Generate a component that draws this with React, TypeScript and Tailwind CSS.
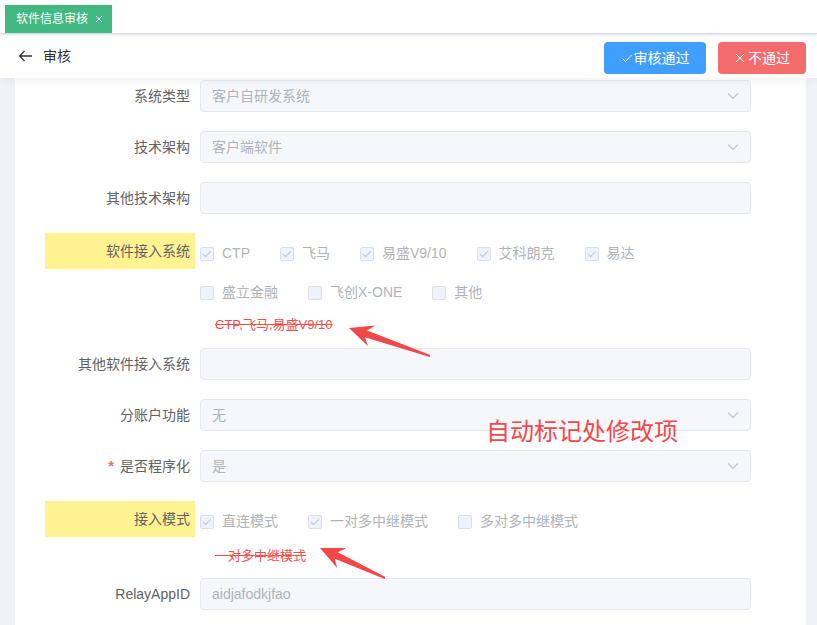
import React from 'react';

const font = "font-['Liberation_Sans','Noto_Sans_CJK_SC',sans-serif]";

const Chevron = () => (
  <svg width="12" height="12" viewBox="0 0 12 12" className="shrink-0">
    <polyline points="1,3.5 6,8.5 11,3.5" fill="none" stroke="#c0c4cc" strokeWidth="1.2" />
  </svg>
);

interface InputProps {
  value?: string;
  select?: boolean;
}

const Input = ({ value = '', select }: InputProps) => (
  <div className="w-[551px] h-[32px] rounded-[4px] border border-[#e4e7ed] bg-[#f5f7fa] flex items-center justify-between px-[11px] text-[14px] text-[#b0b3b9]">
    <span>{value}</span>
    {select && <Chevron />}
  </div>
);

const Checkbox = ({ label, checked }: { label: string; checked?: boolean }) => (
  <span className="inline-flex items-center mr-[30px]">
    <span className="relative w-[14px] h-[14px] mt-[2px] border border-[#dcdfe6] rounded-[2px] bg-[#edf2fc]">
      {checked && (
        <span className="absolute left-[4px] top-[1px] w-[4px] h-[8px] border-r border-b border-[#c0c4cc] rotate-45" />
      )}
    </span>
    <span className="ml-[8px] text-[14px] leading-[20px] text-[#b0b3b9]">{label}</span>
  </span>
);

interface ItemProps {
  label: string;
  required?: boolean;
  highlight?: boolean;
  labelH?: string;
  mb?: string;
  children: React.ReactNode;
}

const Item = ({ label, required, highlight, labelH = 'h-[32px]', mb = 'mb-[19px]', children }: ItemProps) => (
  <div className={`flex items-start ${mb}`}>
    <div
      className={`w-[150px] ${labelH} pr-[5px] flex items-center justify-end text-[14px] text-[#606266] ${
        highlight ? 'bg-[#fff391]' : ''
      }`}
    >
      {required && <span className="text-[#f56c6c] text-[15px] font-bold mr-[6px]">*</span>}
      {label}
    </div>
    <div className="ml-[5px]">{children}</div>
  </div>
);

const Changed = ({ text }: { text: string }) => (
  <div className="h-[20px] leading-[20px] pl-[15px] text-[13px] text-[#f54d4d] line-through">{text}</div>
);

const App = () => {
  return (
    <div className={`relative w-full h-[625px] overflow-hidden bg-[#f0f2f5] ${font}`}>
      {/* tab bar */}
      <div className="h-[34px] bg-white border-b border-[#d8dce5] shadow-[0_1px_3px_rgba(0,0,0,0.12)] flex items-end pl-[5px] relative z-20">
        <div className="h-[28px] bg-[#42b983] text-white text-[12px] flex items-center pl-[11px] pr-[9px]">
          软件信息审核
          <svg width="8" height="8" viewBox="0 0 8 8" className="ml-[7px]">
            <path d="M1 1 L7 7 M7 1 L1 7" stroke="#fff" strokeWidth="1" />
          </svg>
        </div>
      </div>

      {/* header */}
      <div className="h-[44px] bg-white flex items-center justify-between pl-[18px] pr-[11px] relative z-10 shadow-[0_2px_8px_rgba(0,21,41,0.06)]">
        <div className="flex items-center text-[14px] text-[#303133]">
          <svg width="15" height="12" viewBox="0 0 15 12">
            <path d="M14 6 H1.5 M6.5 1 L1.5 6 L6.5 11" fill="none" stroke="#303133" strokeWidth="1.3" />
          </svg>
          <span className="ml-[10px]">审核</span>
        </div>
        <div className="flex items-center gap-[12px] mt-[4px]">
          <button className="h-[32px] w-[102px] rounded-[4px] bg-[#409eff] text-white text-[14px] flex items-center justify-center">
            <svg width="12" height="12" viewBox="0 0 12 12" className="mr-[1px]">
              <polyline points="1.5,6.5 4.5,9.5 10.5,3" fill="none" stroke="#fff" strokeWidth="1" />
            </svg>
            审核通过
          </button>
          <button className="h-[32px] w-[88px] rounded-[4px] bg-[#f56c6c] text-white text-[14px] flex items-center justify-center">
            <svg width="12" height="12" viewBox="0 0 12 12" className="mr-[2px]">
              <path d="M2 2 L10 10 M10 2 L2 10" stroke="#fff" strokeWidth="1" />
            </svg>
            不通过
          </button>
        </div>
      </div>

      {/* form panel */}
      <div className="ml-[15px] w-[791px] h-[547px] bg-white pt-[2px] pl-[30px]">
        <Item label="系统类型">
          <Input value="客户自研发系统" select />
        </Item>
        <Item label="技术架构">
          <Input value="客户端软件" select />
        </Item>
        <Item label="其他技术架构">
          <Input />
        </Item>
        <Item label="软件接入系统" highlight labelH="h-[36px]" mb="mb-[13px]">
          <div className="h-[40px] flex items-center">
            <Checkbox label="CTP" checked />
            <Checkbox label="飞马" checked />
            <Checkbox label="易盛V9/10" checked />
            <Checkbox label="艾科朗克" checked />
            <Checkbox label="易达" checked />
          </div>
          <div className="h-[38px] flex items-center">
            <Checkbox label="盛立金融" />
            <Checkbox label="飞创X-ONE" />
            <Checkbox label="其他" />
          </div>
          <div className="mt-[4px]">
            <Changed text="CTP,飞马,易盛V9/10" />
          </div>
        </Item>
        <Item label="其他软件接入系统">
          <Input />
        </Item>
        <Item label="分账户功能">
          <Input value="无" select />
        </Item>
        <Item label="是否程序化" required>
          <Input value="是" select />
        </Item>
        <Item label="接入模式" highlight labelH="h-[36px]" mb="mb-[12px]">
          <div className="h-[40px] flex items-center">
            <Checkbox label="直连模式" checked />
            <Checkbox label="一对多中继模式" checked />
            <Checkbox label="多对多中继模式" />
          </div>
          <div className="mt-[5px]">
            <Changed text="一对多中继模式" />
          </div>
        </Item>
        <Item label="RelayAppID">
          <Input value="aidjafodkjfao" />
        </Item>
      </div>

      {/* screenshot annotations */}
      <svg className="absolute inset-0 pointer-events-none z-30" width="817" height="625">
        <polygon
          points="349,328 375.3,325.4 367.1,330.6 430.3,355.1 429.7,356.9 364.9,337.2 368.1,346.2"
          fill="#f44848"
        />
        <polygon
          points="320,548 346.4,548.1 337.8,552.3 385.4,577.1 384.6,578.9 334.8,558.7 337.2,568.1"
          fill="#f44848"
        />
      </svg>
      <div className="absolute left-[486px] top-[420px] text-[24px] leading-[24px] text-[#f5484a] z-30">
        自动标记处修改项
      </div>
    </div>
  );
};

export default App;
